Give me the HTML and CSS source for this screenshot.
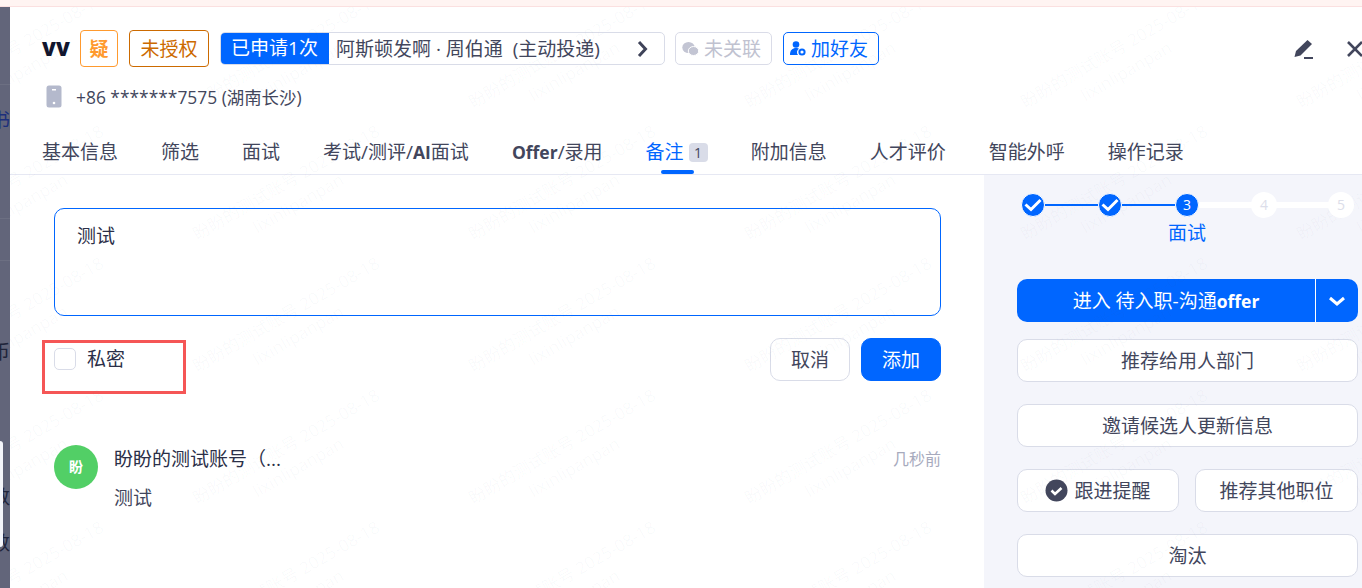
FILE: index.html
```html
<!DOCTYPE html>
<html lang="zh">
<head>
<meta charset="utf-8">
<title>候选人详情</title>
<link rel="stylesheet" href="styles.css">
</head>
<body>
<div class="notice"></div>
<div class="stage">
  <aside class="backdrop">
    <span class="rule rule-a"></span><span class="rule rule-b"></span><span class="rule rule-c"></span>
    <span class="peek peek-blue">书</span>
    <span class="peek peek-city">币</span>
    <span class="peek peek-k1">数</span>
    <span class="peek peek-k2">数</span>
    <span class="peek-card"></span>
  </aside>
  <section class="panel">
    <header class="head">
      <div class="name-row">
        <strong class="name">VV</strong>
        <span class="tag tag-doubt">疑</span>
        <span class="tag tag-auth">未授权</span>
        <div class="apply">
          <span class="apply-count">已申请1次</span>
          <span class="apply-job">阿斯顿发啊 · 周伯通&nbsp;&nbsp;(主动投递)</span>
          <svg class="apply-arrow" width="12" height="18" viewBox="0 0 12 18"><path d="M3 2l6.500 7L3 16" fill="none" stroke="#3f4359" stroke-width="3"/></svg>
        </div>
        <span class="chip chip-off">
          <svg width="17" height="16" viewBox="0 0 17 16"><ellipse cx="6.500" cy="6.500" rx="6.200" ry="5.500" fill="#c3c5d3"/><ellipse cx="11.500" cy="10" rx="5.200" ry="4.500" fill="#c3c5d3" stroke="#fff"/></svg>
          未关联
        </span>
        <span class="chip chip-on">
          <svg width="16" height="15" viewBox="0 0 16 15"><circle cx="6" cy="3.500" r="3.300" fill="#0066ff"/><path d="M0 14c0-5 2.500-7 6-7 1.500 0 2.500.3 3 .8A4 4 0 0 0 8 14Z" fill="#0066ff"/><circle cx="12" cy="11" r="2.600" fill="none" stroke="#0066ff" stroke-width="2"/></svg>
          加好友
        </span>
        <div class="head-tools">
          <svg width="21" height="20" viewBox="0 0 21 20"><path d="M14.500 1 19 5 7.500 16.500 1.500 18 3 12Z" fill="#42465c"/><path d="M11 19h9" stroke="#42465c" stroke-width="2"/></svg>
          <svg class="close" width="18" height="18" viewBox="0 0 18 18"><path d="M2 2l14 14M16 2 2 16" stroke="#42465c" stroke-width="2.600"/></svg>
        </div>
      </div>
      <div class="phone-row">
        <svg width="16" height="23" viewBox="0 0 16 23"><rect x=".5" y=".5" width="15" height="22" rx="2.500" fill="#b4b9cc"/><rect x="6" y="4" width="4" height="1.500" fill="#fff"/><circle cx="8" cy="18" r="1.300" fill="#fff"/></svg>
        <span>+86 *******7575 (湖南长沙)</span>
      </div>
      <nav class="tabs">
        <a class="tab">基本信息</a>
        <a class="tab">筛选</a>
        <a class="tab">面试</a>
        <a class="tab">考试/测评/<b>AI</b>面试</a>
        <a class="tab"><b>Offer</b>/录用</a>
        <a class="tab tab-active">备注<span class="badge">1</span></a>
        <a class="tab">附加信息</a>
        <a class="tab">人才评价</a>
        <a class="tab">智能外呼</a>
        <a class="tab">操作记录</a>
      </nav>
    </header>
    <div class="content">
      <main class="notes">
        <div class="editor">测试</div>
        <div class="form-row">
          <label class="private"><span class="box"></span>私密</label>
          <span class="mark"></span>
          <div class="form-btns">
            <button class="btn btn-plain">取消</button>
            <button class="btn btn-blue">添加</button>
          </div>
        </div>
        <article class="note">
          <span class="avatar">盼</span>
          <div class="note-body">
            <div class="note-top"><span class="note-author">盼盼的测试账号（...</span><time class="note-time">几秒前</time></div>
            <p class="note-text">测试</p>
          </div>
        </article>
      </main>
      <aside class="side">
        <ol class="steps">
          <li class="step step-done"><span class="dot"><svg width="18" height="14" viewBox="0 0 18 14"><path d="M1.500 6.500 7 11.500 16.500 2" fill="none" stroke="#fff" stroke-width="3"/></svg></span></li>
          <li class="step step-done"><span class="dot"><svg width="18" height="14" viewBox="0 0 18 14"><path d="M1.500 6.500 7 11.500 16.500 2" fill="none" stroke="#fff" stroke-width="3"/></svg></span></li>
          <li class="step step-now"><span class="dot">3</span><span class="step-label">面试</span></li>
          <li class="step step-todo"><span class="dot">4</span></li>
          <li class="step step-todo"><span class="dot">5</span></li>
        </ol>
        <div class="actions">
          <div class="split">
            <button class="split-main">进入 待入职-沟通<b>offer</b></button>
            <button class="split-more"><svg width="18" height="10" viewBox="0 0 18 10"><path d="M2 2l7 6 7-6" fill="none" stroke="#fff" stroke-width="3"/></svg></button>
          </div>
          <button class="act">推荐给用人部门</button>
          <button class="act">邀请候选人更新信息</button>
          <div class="act-pair">
            <button class="act"><svg class="act-icon" width="23" height="23" viewBox="0 0 23 23"><circle cx="11.500" cy="11.500" r="11" fill="#42465c"/><path d="M6.500 11.500l3.500 3.500 6.500-6" fill="none" stroke="#fff" stroke-width="2.600"/></svg>跟进提醒</button>
            <button class="act">推荐其他职位</button>
          </div>
          <button class="act">淘汰</button>
        </div>
      </aside>
    </div>
    <div class="marks">
      <div class="wm"><span>盼盼的测试账号 2025-08-18<br>lixinlipanpan</span></div><div class="wm"><span>盼盼的测试账号 2025-08-18<br>lixinlipanpan</span></div><div class="wm"><span>盼盼的测试账号 2025-08-18<br>lixinlipanpan</span></div><div class="wm"><span>盼盼的测试账号 2025-08-18<br>lixinlipanpan</span></div><div class="wm"><span>盼盼的测试账号 2025-08-18<br>lixinlipanpan</span></div><div class="wm"><span>盼盼的测试账号 2025-08-18<br>lixinlipanpan</span></div>
      <div class="wm"><span>盼盼的测试账号 2025-08-18<br>lixinlipanpan</span></div><div class="wm"><span>盼盼的测试账号 2025-08-18<br>lixinlipanpan</span></div><div class="wm"><span>盼盼的测试账号 2025-08-18<br>lixinlipanpan</span></div><div class="wm"><span>盼盼的测试账号 2025-08-18<br>lixinlipanpan</span></div><div class="wm"><span>盼盼的测试账号 2025-08-18<br>lixinlipanpan</span></div><div class="wm"><span>盼盼的测试账号 2025-08-18<br>lixinlipanpan</span></div>
      <div class="wm"><span>盼盼的测试账号 2025-08-18<br>lixinlipanpan</span></div><div class="wm"><span>盼盼的测试账号 2025-08-18<br>lixinlipanpan</span></div><div class="wm"><span>盼盼的测试账号 2025-08-18<br>lixinlipanpan</span></div><div class="wm"><span>盼盼的测试账号 2025-08-18<br>lixinlipanpan</span></div><div class="wm"><span>盼盼的测试账号 2025-08-18<br>lixinlipanpan</span></div><div class="wm"><span>盼盼的测试账号 2025-08-18<br>lixinlipanpan</span></div>
      <div class="wm"><span>盼盼的测试账号 2025-08-18<br>lixinlipanpan</span></div><div class="wm"><span>盼盼的测试账号 2025-08-18<br>lixinlipanpan</span></div><div class="wm"><span>盼盼的测试账号 2025-08-18<br>lixinlipanpan</span></div><div class="wm"><span>盼盼的测试账号 2025-08-18<br>lixinlipanpan</span></div><div class="wm"><span>盼盼的测试账号 2025-08-18<br>lixinlipanpan</span></div><div class="wm"><span>盼盼的测试账号 2025-08-18<br>lixinlipanpan</span></div>
      <div class="wm"><span>盼盼的测试账号 2025-08-18<br>lixinlipanpan</span></div><div class="wm"><span>盼盼的测试账号 2025-08-18<br>lixinlipanpan</span></div><div class="wm"><span>盼盼的测试账号 2025-08-18<br>lixinlipanpan</span></div><div class="wm"><span>盼盼的测试账号 2025-08-18<br>lixinlipanpan</span></div><div class="wm"><span>盼盼的测试账号 2025-08-18<br>lixinlipanpan</span></div><div class="wm"><span>盼盼的测试账号 2025-08-18<br>lixinlipanpan</span></div>
    </div>
  </section>
</div>
</body>
</html>
```
FILE: styles.css
```css
* { box-sizing: border-box; }
html, body { margin: 0; height: 100%; overflow: hidden; }
body {
  width: 1362px;
  height: 588px;
  display: flex;
  flex-direction: column;
  font-family: "Open Sans", "Noto Sans CJK SC", sans-serif;
  font-size: 19px;
  line-height: 26px;
  color: #42465c;
  background: #fff;
}
button { font: inherit; color: inherit; background: none; padding: 0; margin: 0; cursor: pointer; }

.notice { height: 7px; flex: none; background: #fff4f2; border-bottom: 1px solid #fbe0e0; }
.stage { flex: 1; display: flex; min-height: 0; }

.backdrop { width: 10px; flex: none; background: #62657a; position: relative; overflow: hidden; }
.rule { position: absolute; left: 0; width: 10px; height: 1px; background: #6c6f82; }
.rule-a { top: 77px; }
.rule-b { top: 211px; }
.rule-c { top: 253px; }
.peek { position: absolute; right: 0; width: 19px; line-height: 24px; color: #20243a; }
.peek-blue { top: 101px; color: #1c2f7c; }
.peek-city { top: 333px; }
.peek-k1 { top: 478px; }
.peek-k2 { top: 524px; }
.peek-card { position: absolute; left: 0; top: 434px; width: 3px; height: 106px; background: #f4f5fa; border-radius: 0 4px 4px 0; }

.panel { flex: 1; min-width: 0; position: relative; overflow: hidden; display: flex; flex-direction: column; background: #fff; }

.head { flex: none; height: 168px; padding: 23px 0 0 32px; border-bottom: 1px solid #e6e8f3; }
.name-row { display: flex; align-items: center; height: 37px; }
.name-row > * { flex: none; }
.name { font-size: 20px; font-weight: 800; color: #12162e; width: 38px; }
.tag { display: flex; align-items: center; justify-content: center; height: 37px; border-radius: 4px; }
.tag-doubt { width: 38px; border: 1px solid #ff9a2e; color: #ff9a2e; font-weight: 700; }
.tag-auth { width: 80px; margin-left: 11px; border: 1px solid #cc6a00; color: #cc6a00; }
.apply { display: flex; align-items: center; width: 445px; height: 33px; margin-left: 11px; border: 1px solid #d9dce8; border-radius: 5px; overflow: hidden; }
.apply-count { flex: none; width: 109px; height: 33px; margin: -1px 0 0 -1px; display: flex; align-items: center; justify-content: center; background: #0066ff; color: #fff; }
.apply-job { flex: 1; padding-left: 7px; white-space: nowrap; }
.apply-arrow { flex: none; margin-right: 16px; }
.chip { display: flex; align-items: center; gap: 5px; height: 33px; border-radius: 5px; border: 1px solid; white-space: nowrap; }
.chip-off { width: 97px; margin-left: 10px; padding-left: 6px; border-color: #dadce8; color: #c0c2d0; }
.chip-on { width: 96px; margin-left: 11px; padding-left: 6px; border-color: #0066ff; color: #0066ff; }
.head-tools { display: flex; align-items: center; gap: 32px; margin-left: 414px; }
.head-tools svg { flex: none; }
.phone-row { display: flex; align-items: center; gap: 14px; margin: 18px 0 0 4px; height: 23px; white-space: nowrap; font-size: 17.400px; }
.tabs { display: flex; gap: 43px; margin-top: 29px; }
.tab { position: relative; height: 30px; display: flex; align-items: center; white-space: nowrap; }
.tab b { font-weight: 700; font-size: 17.500px; }
.tab-active { color: #0066ff; }
.tab-active::after { content: ""; position: absolute; left: 15px; width: 33px; height: 4px; bottom: -7px; background: #0066ff; border-radius: 2px; }
.badge { margin-left: 5px; width: 19px; height: 19px; border-radius: 4px; background: #d9dce8; color: #42465c; font-size: 14px; line-height: 19px; text-align: center; }

.content { flex: 1; min-height: 0; display: flex; }
.notes { width: 974px; flex: none; padding: 33px 43px 0 44px; }
.editor { height: 108px; border: 1px solid #0066ff; border-radius: 10px; padding: 14px 22px; color: #2b2f48; }
.form-row { position: relative; display: flex; align-items: flex-start; justify-content: space-between; margin-top: 22px; }
.private { display: flex; align-items: center; gap: 11px; margin-top: 10px; height: 22px; color: #2b2f48; }
.box { width: 22px; height: 22px; border: 1px solid #d9dce8; border-radius: 5px; background: #fff; }
.mark { position: absolute; left: -12px; top: 2px; width: 144px; height: 54px; border: 3px solid #f55656; pointer-events: none; }
.form-btns { display: flex; gap: 11px; }
.btn { width: 80px; height: 43px; border-radius: 10px; border: 1px solid #d9dce8; }
.btn-plain { background: #fff; }
.btn-blue { background: #0066ff; border-color: #0066ff; color: #fff; }
.note { display: flex; gap: 16px; margin-top: 64px; }
.avatar { flex: none; width: 44px; height: 44px; border-radius: 50%; background: #52cf66; color: #fff; font-size: 14px; font-weight: 700; display: flex; align-items: center; justify-content: center; }
.note-body { flex: 1; min-width: 0; }
.note-top { display: flex; justify-content: space-between; align-items: center; height: 28px; }
.note-author { color: #2b2f48; }
.note-time { font-size: 16px; color: #a7aabd; }
.note-text { margin: 12px 0 0; line-height: 26px; }

.side { flex: 1; min-width: 0; background: #f4f5fb; padding: 17px 4px 0 33px; }
.steps { list-style: none; margin: 0 0 0 -22.500px; padding: 0; display: grid; grid-template-columns: repeat(5, 77px); }
.step { position: relative; height: 87px; display: flex; flex-direction: column; align-items: center; }
.dot { position: relative; z-index: 1; display: flex; align-items: center; justify-content: center; border-radius: 50%; }
.step:not(:last-child)::after { content: ""; position: absolute; left: 38.500px; width: 77px; }
.step-done::after { top: 12px; height: 2px; background: #0066ff; }
.step-now::after, .step-todo::after { top: 10px; height: 6px; background: #fff; }
.step-done .dot, .step-now .dot { width: 24px; height: 24px; margin-top: 1px; background: #0066ff; border: 1px solid #fff; color: #fff; font-size: 14px; }
.step-todo .dot { width: 26px; height: 26px; background: #fff; color: #dcdeea; font-size: 14px; }
.step-label { color: #0066ff; margin-top: 3px; }

.actions { display: flex; flex-direction: column; gap: 22px; }
.split { display: flex; height: 43px; border-radius: 10px; background: #0066ff; color: #fff; overflow: hidden; margin-bottom: -5px; }
.split-main { flex: 1; border: 0; color: #fff; border-right: 1px solid #fff; }
.split-main b { font-weight: 700; font-size: 17.500px; }
.split-more { flex: none; width: 42px; border: 0; display: flex; align-items: center; justify-content: center; }
.act { height: 43px; border: 1px solid #d9dce8; border-radius: 10px; background: #fff; display: flex; align-items: center; justify-content: center; }
.act-pair { display: flex; gap: 16px; }
.act-pair .act:first-child { width: 162px; flex: none; }
.act-pair .act:last-child { flex: 1; }
.act-icon { margin-right: 6px; }

.marks {
  position: absolute;
  left: -132px;
  top: -12px;
  display: grid;
  grid-template-columns: repeat(6, 276px);
  grid-auto-rows: 132px;
  pointer-events: none;
}
.wm { display: flex; align-items: center; justify-content: center; white-space: nowrap; }
.wm span { transform: rotate(-30deg); text-align: center; font-size: 17px; line-height: 24px; color: rgba(90, 95, 130, 0.035); }
```
